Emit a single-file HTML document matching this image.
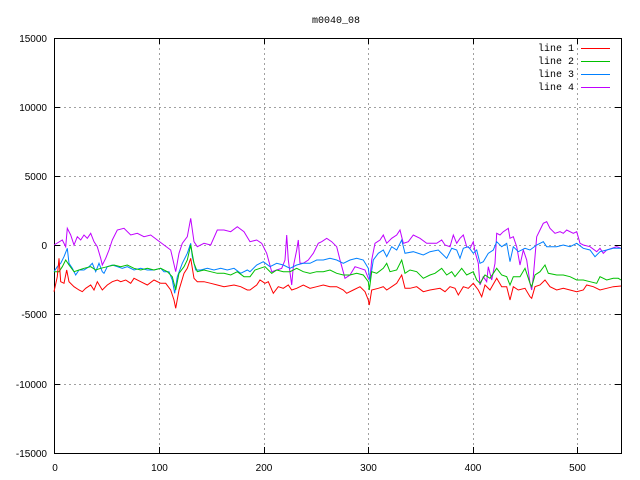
<!DOCTYPE html>
<html><head><meta charset="utf-8"><style>
html,body{margin:0;padding:0;background:#fff;}
svg{display:block;}
text{font-family:"Liberation Sans",sans-serif;font-size:10px;fill:#000;}
.m{font-family:"Liberation Mono",monospace;font-size:10px;}
</style></head><body>
<svg width="640" height="480" viewBox="0 0 640 480" xmlns="http://www.w3.org/2000/svg">
<rect width="640" height="480" fill="#fff"/>
<g stroke="#a0a0a0" stroke-width="1" stroke-dasharray="2,3" fill="none">
<path d="M54 107.5H621M54 176.5H621M54 245.5H621M54 314.5H621M54 384.5H621"/>
<path d="M159.5 38V453M264.5 38V453M368.5 38V453M473.5 38V453M577.5 38V453"/>
</g>
<g stroke="#000" stroke-width="1" fill="none">
<rect x="54.5" y="38.5" width="567" height="415"/>
<path d="M54 107.5h6M54 176.5h6M54 245.5h6M54 314.5h6M54 384.5h6M621 107.5h-6M621 176.5h-6M621 245.5h-6M621 314.5h-6M621 384.5h-6"/>
<path d="M159.5 453v-6M264.5 453v-6M368.5 453v-6M473.5 453v-6M577.5 453v-6M159.5 38v6M264.5 38v6M368.5 38v6M473.5 38v6M577.5 38v6"/>
</g>
<g text-anchor="end">
<text x="47" y="42">15000</text>
<text x="47" y="111">10000</text>
<text x="47" y="180">5000</text>
<text x="47" y="249">0</text>
<text x="47" y="318">-5000</text>
<text x="47" y="388">-10000</text>
<text x="47" y="457">-15000</text>
</g>
<g text-anchor="middle">
<text x="55" y="471">0</text>
<text x="159.5" y="471">100</text>
<text x="264" y="471">200</text>
<text x="368.5" y="471">300</text>
<text x="473" y="471">400</text>
<text x="577.5" y="471">500</text>
<text class="m" x="336" y="23">m0040_08</text>
</g>
<g text-anchor="end" class="m">
<text class="m" x="574" y="51">line 1</text>
<text class="m" x="574" y="64">line 2</text>
<text class="m" x="574" y="77">line 3</text>
<text class="m" x="574" y="90">line 4</text>
</g>
<g stroke-width="1" fill="none" stroke-linejoin="miter">
<path d="M581 48.5h29" stroke="#ff0000"/>
<path d="M581 61.5h29" stroke="#00c000"/>
<path d="M581 74.5h29" stroke="#0080ff"/>
<path d="M581 87.5h29" stroke="#c000ff"/>

<polyline stroke="#c000ff" points="54,245 59,242 62.3,240 65.7,246.7 67.3,228.3 70.7,235 74,245 77.3,236.7 80.7,240 84,235 87.3,238.3 90.7,233.3 94,241.7 97.3,246.7 100.7,258.3 102.3,265 105.7,258.3 109,250 112.3,240 117.3,230 124,228.3 130.7,235 137.3,233.3 144,236.7 150.7,235 157.3,240 164,245 170.7,250 175.7,271.7 179,253.3 182.3,243.3 187.3,236.7 190.7,218.3 194,241.7 197.3,246.7 204,243.3 210.7,245 217.3,230 224,230 230.7,231.7 237.3,226.7 244,231.7 250,241.7 256.7,240 261.7,243.3 266.7,253.3 271.7,271.7 276.7,270 281.7,268.3 285,260 286.7,235 288.3,260 291.7,285 293.3,266.7 296.7,250 298.3,240 300,263.3 303.3,263.3 308.3,260 313.3,253.3 318.3,243.3 321.7,241.7 326.7,238.3 331.7,241.7 336.7,246.7 340,260 345,278.3 350,275 355,266.7 360,268.3 365,270 368.3,278.3 370,278.3 371.7,260 375,243.3 380,240 383.3,235 386.7,243.3 391.7,238.3 396.7,235 400,230 403.3,243.3 408.3,241.7 413.3,235 420,238.3 426.7,243.3 433.3,243.3 436.7,243.3 441.7,240 445,245 450,246.7 453.3,235 456.7,243.3 460,238.3 463.3,235 466.7,246.7 470,248.3 473.3,241.7 475,251.7 478.3,263.3 480,285 483.3,276.7 486.7,281.7 488.3,266.7 491.7,280 495,263.3 496.7,233.3 500,235 503.3,231.7 508.3,228.3 510,238.3 513.3,236.7 516.7,246.7 520,265 523.3,250 526.7,260 530,283.3 531.7,290 533.3,276.7 536.7,236.7 540,230 543.3,223.3 546.7,221.7 550,228.3 555,233.3 560,231.7 563.3,233.3 566.7,230 573.3,233.3 576.7,231.7 580,243.3 583.3,245 590,246.7 596.7,251.7 600,248.3 603.3,253.3 606.7,250 611.7,248.3 616.7,246.7 621,248.3"/>

<polyline stroke="#0080ff" points="54,271.7 57.3,266.7 60.7,263.3 64,256.7 67.3,248.3 69,263.3 72.3,268.3 75.7,275 79,270 84,270 89,266.7 92.3,263.3 95.7,271.7 99,263.3 102.3,271.7 104,273.3 107.3,266.7 112.3,265 117.3,266.7 122.3,268.3 127.3,266.7 134,270 140.7,268.3 147.3,270 154,270 160.7,268.3 164,271.7 169,271.7 172.3,280 174.7,293.3 177.3,276.7 182.3,263.3 187.3,253.3 190.7,243.3 192.3,256.7 195.7,270 200.7,270 207.3,268.3 214,270 220.7,268.3 227.3,270 234,268.3 240.7,273.3 247.3,270 250,271.7 256.7,265 263.3,261.7 270,266.7 276.7,263.3 283.3,265 290,268.3 296.7,265 303.3,263.3 310,263.3 316.7,260 323.3,260 330,258.3 336.7,260 343.3,263.3 350,260 356.7,258.3 363.3,260 368.3,268.3 370,281.7 373.3,260 378.3,253.3 383.3,250 386.7,256.7 391.7,246.7 396.7,250 401.7,240 405,253.3 413.3,251.7 423.3,255 430,251.7 438.3,250 446.7,258.3 451.7,248.3 456.7,250 460,258.3 463.3,248.3 468.3,246.7 473.3,253.3 476.7,250 480,263.3 483.3,261.7 488.3,253.3 493.3,250 496.7,241.7 501.7,246.7 506.7,243.3 510,261.7 513.3,246.7 518.3,251.7 525,248.3 530,250 536.7,245 543.3,241.7 546.7,246.7 556.7,246.7 563.3,245 570,246.7 576.7,243.3 583.3,248.3 590,250 595,256.7 600,251.7 606.7,250 613.3,248.3 621,248.3"/>

<polyline stroke="#00c000" points="54,271.7 59,271.7 62.3,266.7 65.7,260 69,265 74,271.7 79,270 84,268.3 90.7,266.7 95.7,270 100.7,268.3 107.3,266.7 114,265 120.7,266.7 127.3,265 134,268.3 140.7,270 147.3,268.3 154,270 160.7,268.3 167.3,271.7 172.3,276.7 175.7,290 179,273.3 184,266.7 187.3,260 190.7,245 194,263.3 197.3,271.7 204,270 210.7,271.7 217.3,273.3 224,273.3 230.7,275 237.3,271.7 244,276.7 250,276.7 255,270 260,268.3 265,266.7 271.7,273.3 276.7,270 283.3,271.7 290,271.7 296.7,268.3 303.3,271.7 310,273.3 316.7,271.7 323.3,271.7 330,270 336.7,273.3 343.3,275 350,275 356.7,273.3 363.3,275 368.3,281.7 369.3,290 371.7,271.7 376.7,273.3 383.3,268.3 386.7,263.3 390,271.7 396.7,270 401.7,260 405,273.3 410,270 416.7,271.7 423.3,278.3 430,275 435,273.3 441.7,268.3 446.7,275 451.7,271.7 455,276.7 461.7,268.3 466.7,275 473.3,271.7 476.7,280 480,283.3 485,275 490,278.3 496.7,268.3 501.7,275 506.7,276.7 510,285 513.3,276.7 520,276.7 525,268.3 530,283.3 531.7,286.7 535,275 540,271.7 545,265 548.3,273.3 556.7,275 563.3,275 570,276.7 576.7,280 583.3,280 590,281.7 596.7,283.3 600,276.7 606.7,280 613.3,278.3 618.3,278.3 621,280"/>

<polyline stroke="#ff0000" points="54,291.7 57.3,276.7 59,258.3 60.7,281.7 64,283.3 66.7,270 69,281.7 74,286.7 79,290 82.3,291.7 85.7,288.3 90.7,285 94,290 97.3,281.7 102.3,290 107.3,285 112.3,281.7 117.3,280 120.7,281.7 125.7,280 130.7,283.3 134,278.3 140.7,281.7 147.3,285 154,280 160.7,283.3 165.7,283.3 170.7,290 174,300 175.7,308.3 179,290 184,273.3 187.3,268.3 190.7,258.3 194,278.3 197.3,281.7 204,281.7 210.7,283.3 217.3,285 224,286.7 234,285 240.7,286.7 247.3,290 250,290 256.7,285 260,280 265,283.3 268.3,281.7 273.3,293.3 278.3,286.7 283.3,288.3 288.3,285 291.7,290 296.7,288.3 303.3,285 310,288.3 316.7,286.7 323.3,285 330,286.7 336.7,286.7 343.3,290 346.7,293.3 353.3,290 360,286.7 365,291.7 368.3,300 369.3,305 371.7,290 378.3,288.3 383.3,286.7 386.7,290 391.7,286.7 396.7,283.3 401.7,275 405,288.3 410,288.3 416.7,286.7 423.3,291.7 430,290 440,288.3 445,291.7 450,286.7 455,288.3 458.3,295 463.3,286.7 468.3,288.3 473.3,283.3 478.3,290 481.7,296.7 485,285 490,290 496.7,278.3 501.7,286.7 506.7,286.7 510,300 513.3,286.7 518.3,290 525,288.3 530,296.7 531.7,298.3 535,286.7 540,285 545,280 550,286.7 556.7,290 563.3,288.3 570,290 576.7,291.7 583.3,290 586.7,285 593.3,286.7 600,290 606.7,288.3 613.3,286.7 621,286"/>
</g>
</svg>
</body></html>
